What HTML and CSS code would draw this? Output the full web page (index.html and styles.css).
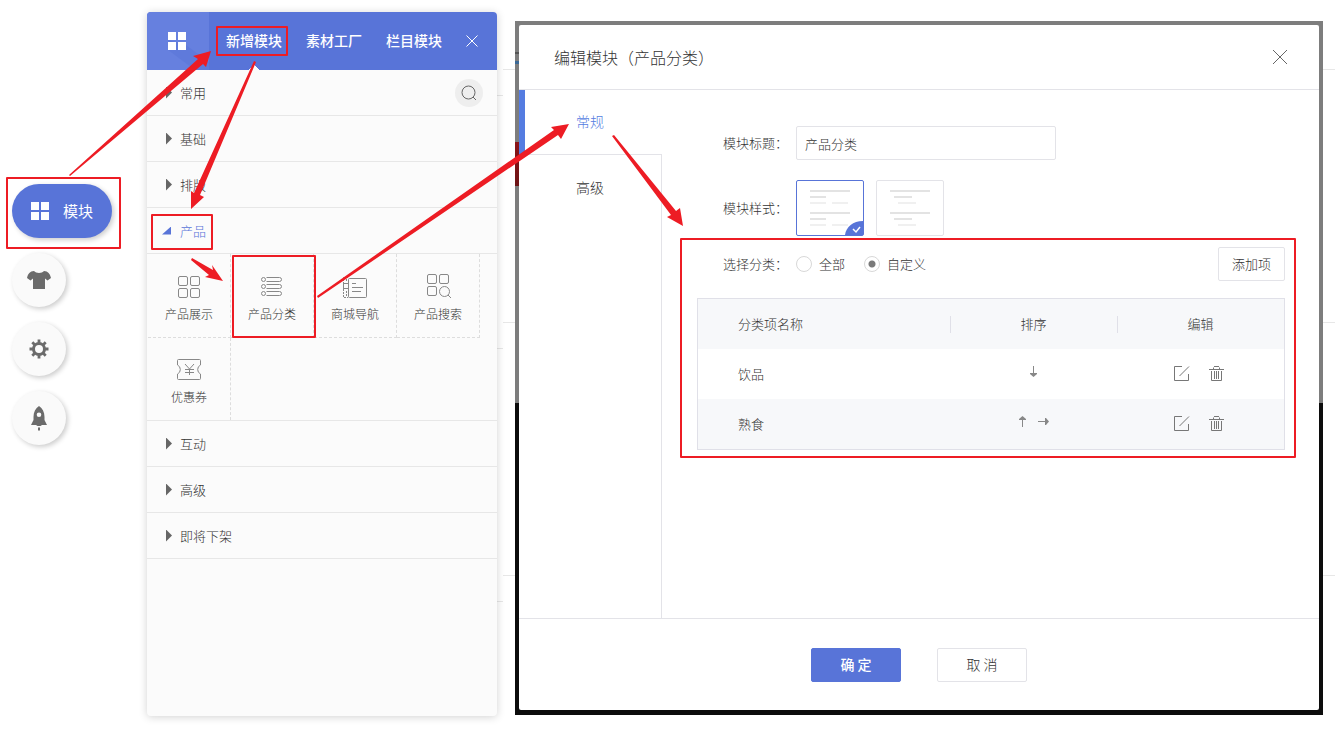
FILE: index.html
```html
<!DOCTYPE html>
<html lang="zh-CN">
<head>
<meta charset="utf-8">
<title>编辑模块</title>
<link rel="stylesheet" href="styles.css">
</head>
<body>
<svg class="defs" aria-hidden="true">
  <symbol id="tiles" viewBox="0 0 18 18"><path fill="currentColor" d="M0 0h8v8H0zM10 0h8v8h-8zM0 10h8v8H0zM10 10h8v8h-8z"/></symbol>
  <symbol id="edit" viewBox="0 0 16 16"><path fill="none" stroke="currentColor" d="M8 .5H.5v14h14V8M5.500 10L15 .5"/></symbol>
  <symbol id="trash" viewBox="0 0 16 16"><path fill="none" stroke="currentColor" d="M0 3.500h15M4.500 3V1.500M5 .5h5M10.500 3V1.500M2.500 5v9.500h10V5M5.500 5v8M7.500 5v8M9.500 5v8"/></symbol>
  <symbol id="arrow" viewBox="0 0 11 11"><path fill="currentColor" d="M5 0h1v7h3v1L5.500 11 2 8V7h3z"/></symbol>
</svg>

<nav class="rail">
  <button class="rail-btn rail-main"><svg width="18" height="18"><use href="#tiles"/></svg>模块</button>
  <button class="rail-btn" aria-label="样式"><svg width="24" height="18" viewBox="0 0 24 18"><path fill="currentColor" d="M7 0C9 2.500 15 2.500 17 0c4 .3 6 2.500 7 7l-3.500 2.500L18 7.500V18H6V7.500L3.500 9.500 0 7C1 2.500 3 .3 7 0z"/></svg></button>
  <button class="rail-btn" aria-label="设置"><svg width="20" height="20" viewBox="-10 -10 20 20"><circle r="5.500" fill="none" stroke="currentColor" stroke-width="3"/><g stroke="currentColor" stroke-width="2.800"><path d="M0-6v-3.500M0 6v3.500M-6 0h-3.500M6 0h3.500M4.300 4.300l2.400 2.400M-4.300-4.300l-2.400-2.400M4.300-4.300l2.400-2.400M-4.300 4.300l-2.400 2.400"/></g></svg></button>
  <button class="rail-btn" aria-label="发布"><svg width="16" height="25" viewBox="0 0 16 25"><path fill="currentColor" fill-rule="evenodd" d="M8 0c3.500 2.500 5.500 6 5.500 11v3L16 19h-5l-1.500 1h-3L5 19H0l2.500-5v-3C2.500 6 4.500 2.500 8 0zm0 6.500a2.300 2.300 0 1 0 0 4.600 2.300 2.300 0 0 0 0-4.600zM7 21.500h2V24l-1 1-1-1z"/></svg></button>
</nav>

<section class="panel">
  <header class="panel-head">
    <div class="panel-logo">
      <svg width="62" height="58" viewBox="0 0 62 58"><path fill="#5f7adb" d="M39 33l23 17v8H48L21 38V28z"/></svg>
      <svg class="panel-tiles" width="18" height="18"><use href="#tiles"/></svg>
    </div>
    <button class="panel-tab is-active">新增模块</button>
    <button class="panel-tab">素材工厂</button>
    <button class="panel-tab">栏目模块</button>
    <button class="panel-close" aria-label="关闭"><svg width="12" height="12" viewBox="0 0 12 12"><path stroke="currentColor" d="M.5 .5l11 11M11.500 .5l-11 11"/></svg></button>
  </header>
  <div class="group">
    <button class="group-name">常用</button>
    <button class="search" aria-label="搜索"><svg width="16" height="16" viewBox="0 0 16 16" fill="none" stroke="currentColor"><circle cx="7.500" cy="7.500" r="6.500"/><path d="M12 12l3 3"/></svg></button>
  </div>
  <div class="group"><button class="group-name">基础</button></div>
  <div class="group"><button class="group-name">排版</button></div>
  <div class="group"><button class="group-name is-open">产品</button></div>
  <div class="modules">
    <button class="module"><svg width="26" height="24" viewBox="0 0 26 24"><g fill="none" stroke="currentColor"><rect x="2.500" y=".5" width="9" height="9" rx="1.500"/><rect x="14.500" y=".5" width="9" height="9" rx="1.500"/><rect x="2.500" y="12.500" width="9" height="9" rx="1.500"/><rect x="14.500" y="12.500" width="9" height="9" rx="1.500"/></g></svg>产品展示</button>
    <button class="module"><svg width="26" height="24" viewBox="0 0 26 24"><g fill="none" stroke="currentColor"><circle cx="4.500" cy="3.500" r="2"/><circle cx="4.500" cy="10.500" r="2"/><circle cx="4.500" cy="17.500" r="2"/><path d="M7.500 1.500h13a2 2 0 0 1 0 4h-13M7.500 8.500h13a2 2 0 0 1 0 4h-13M7.500 15.500h13a2 2 0 0 1 0 4h-13"/></g></svg>产品分类</button>
    <button class="module"><svg width="26" height="24" viewBox="0 0 26 24"><g fill="none" stroke="currentColor"><rect x="6.500" y="2.500" width="18" height="19" rx="1"/><path d="M10 7.500h4M10 11.500h11M10 15.500h9M1.500 7.500h5M1.500 12.500h5M1.500 7v6"/><path stroke-dasharray="2 1" d="M6 1.500H1.500V7M1.500 13v8.500H6M4.500 3v3M4.500 15v5"/></g></svg>商城导航</button>
    <button class="module"><svg width="26" height="24" viewBox="0 0 26 24" overflow="visible"><g fill="none" stroke="currentColor"><rect x="2.500" y="-1.500" width="9" height="9" rx="1.500"/><rect x="14.500" y="-1.500" width="9" height="9" rx="1.500"/><rect x="2.500" y="10.500" width="9" height="9" rx="1.500"/><circle cx="19.500" cy="15.500" r="5"/><path d="M23 19l3 3"/></g></svg>产品搜索</button>
    <button class="module"><svg width="26" height="24" viewBox="0 0 26 24"><g fill="none" stroke="currentColor"><path d="M2.500 .5h21a1 1 0 0 1 1 1V6a5 5 0 0 0 0 9v4.500a1 1 0 0 1-1 1h-21a1 1 0 0 1-1-1V15a5 5 0 0 0 0-9V1.500a1 1 0 0 1 1-1z"/><path d="M9 5l4.500 5L18 5M13.500 10v6M9 10.500h9M9 13.500h9"/></g></svg>优惠券</button>
  </div>
  <div class="group"><button class="group-name">互动</button></div>
  <div class="group"><button class="group-name">高级</button></div>
  <div class="group"><button class="group-name">即将下架</button></div>
</section>

<div class="strip strip-near"></div>
<div class="strip"></div>

<main class="backdrop">
  <section class="dialog" role="dialog" aria-labelledby="dialog-title">
    <header class="dialog-head">
      <h1 id="dialog-title">编辑模块（产品分类）</h1>
      <button class="dialog-close" aria-label="关闭"><svg width="16" height="16" viewBox="0 0 16 16"><path stroke="currentColor" d="M1 1l14 14M15 1L1 15"/></svg></button>
    </header>
    <div class="dialog-body">
      <nav class="side">
        <button class="side-tab is-active">常规</button>
        <button class="side-tab">高级</button>
      </nav>
      <form class="form">
        <div class="field field-title">
          <label class="label" for="module-title">模块标题<span class="colon">：</span></label>
          <input class="text" id="module-title" type="text" value="产品分类">
        </div>
        <div class="field field-style">
          <span class="label">模块样式<span class="colon">：</span></span>
          <label class="swatch"><input type="radio" name="look" aria-label="样式一" checked>
            <svg width="66" height="54" viewBox="0 0 66 54"><path fill="#e3e3e3" d="M13 9h40v2H13zM13 15h16v2H13zM13 31h40v2H13zM13 37h16v2H13z"/><path fill="#f0f0f0" d="M13 21h16v2H13zM35 21h16v2H35zM13 43h16v2H13zM35 43h16v2H35z"/><path fill="#5874d8" d="M48 54c1-8 8-14 18-14v14z"/><path fill="none" stroke="#fff" stroke-width="1.500" d="M56 48l3 3 4-5"/></svg></label>
          <label class="swatch"><input type="radio" name="look" aria-label="样式二">
            <svg width="66" height="54" viewBox="0 0 66 54"><path fill="#e3e3e3" d="M13 9h40v2H13zM17 15h18v2H17zM13 31h40v2H13zM17 37h18v2H17z"/><path fill="#f0f0f0" d="M21 21h18v2H21zM21 43h18v2H21z"/></svg></label>
        </div>
        <div class="field field-kind">
          <span class="label">选择分类<span class="colon">：</span></span>
          <label class="choice"><input type="radio" name="kind">全部</label>
          <label class="choice"><input type="radio" name="kind" checked>自定义</label>
          <button type="button" class="btn btn-add">添加项</button>
        </div>
        <table class="items">
          <thead><tr><th class="col-name">分类项名称</th><th>排序</th><th>编辑</th></tr></thead>
          <tbody>
            <tr><td class="col-name">饮品</td>
              <td><div class="icons sort"><button type="button" aria-label="下移"><svg width="11" height="11"><use href="#arrow"/></svg></button></div></td>
              <td><div class="icons"><button type="button" aria-label="编辑"><svg width="16" height="16"><use href="#edit"/></svg></button><button type="button" aria-label="删除"><svg width="16" height="16"><use href="#trash"/></svg></button></div></td></tr>
            <tr><td class="col-name">熟食</td>
              <td><div class="icons sort"><button type="button" aria-label="上移"><svg class="up" width="11" height="11"><use href="#arrow"/></svg></button><button type="button" aria-label="降级"><svg class="right" width="11" height="11"><use href="#arrow"/></svg></button></div></td>
              <td><div class="icons"><button type="button" aria-label="编辑"><svg width="16" height="16"><use href="#edit"/></svg></button><button type="button" aria-label="删除"><svg width="16" height="16"><use href="#trash"/></svg></button></div></td></tr>
          </tbody>
        </table>
      </form>
    </div>
    <footer class="dialog-foot">
      <button class="btn btn-primary">确 定</button>
      <button class="btn btn-cancel">取 消</button>
    </footer>
  </section>
</main>
<div class="strip"></div>

<svg class="guide" width="1335" height="732" viewBox="0 0 1335 732" aria-hidden="true">
  <g fill="none" stroke="#ed1c24" stroke-width="2" stroke-linejoin="round">
    <rect x="7" y="178" width="113" height="70"/>
    <rect x="217" y="27" width="70" height="28"/>
    <rect x="152" y="215" width="60" height="34"/>
    <rect x="233" y="256" width="82" height="81"/>
    <rect x="681" y="239" width="614" height="218"/>
  </g>
  <g fill="#ed1c24">
    <path d="M69 175l1 1L203 64l3 3 5-16-18 5 5 3z"/>
    <path d="M254 61l2 1-56 133 4 2-13 12v-18l3 2z"/>
    <path d="M192 258l21 12-1-5 11 16-18-4 4-2-18-15z"/>
    <path d="M317 296l237-166-3-3 18-3-8 15-3-4-240 163z"/>
    <path d="M614 135l62 76 4-3 3 18-16-9 4-2-59-79z"/>
  </g>
</svg>
</body>
</html>
```
FILE: styles.css
```css
* { box-sizing: border-box; }

body {
  margin: 0;
  min-height: 100vh;
  display: flex;
  position: relative;
  overflow: hidden;
  background: #fff;
  color: #333;
  font: 300 13px/20px "Noto Sans CJK SC", sans-serif;
}

button, input {
  font: inherit;
  color: inherit;
  margin: 0;
}

button {
  border: 0;
  padding: 0;
  background: none;
  cursor: pointer;
}

svg { display: block; }

.defs {
  position: absolute;
  width: 0;
  height: 0;
}

/* Left rail */
.rail {
  flex: none;
  width: 147px;
  padding: 184px 0 0 12px;
  display: flex;
  flex-direction: column;
  gap: 15px;
}

.rail-btn {
  width: 54px;
  height: 54px;
  border-radius: 27px;
  display: flex;
  align-items: center;
  justify-content: center;
  background: #fafafa;
  color: #6b6b6b;
  box-shadow: 2px 2px 5px rgba(0, 0, 0, .2);
}

.rail-main {
  width: 100px;
  gap: 14px;
  background: #5874d8;
  color: #fff;
  font-size: 15px;
  font-weight: 400;
}

/* Module panel */
.panel {
  flex: none;
  width: 350px;
  margin: 12px 0 16px;
  border-radius: 4px;
  background: #fbfbfb;
  box-shadow: 0 1px 8px rgba(0, 0, 0, .18);
  z-index: 1;
}

.panel-head {
  height: 58px;
  display: flex;
  align-items: center;
  border-radius: 4px 4px 0 0;
  overflow: hidden;
  background: #5874d8;
  color: #fff;
}

.panel-logo {
  width: 62px;
  margin-right: 5px;
  display: grid;
  background: #6680df;
}

.panel-logo svg { grid-area: 1 / 1; }

.panel-tiles {
  align-self: center;
  margin-left: 21px;
}

.panel-tab {
  width: 80px;
  height: 58px;
  padding-bottom: 2px;
  font-size: 14px;
  font-weight: 500;
}

.panel-tab.is-active {
  background: conic-gradient(from 135deg at 50% 0, #fbfbfb 90deg, transparent 0) bottom center / 12px 6px no-repeat;
}

.panel-close { margin-left: 12px; }

.group {
  height: 46px;
  padding: 0 14px 0 19px;
  display: flex;
  align-items: center;
  justify-content: space-between;
  border-bottom: 1px solid #e7e7e7;
}

.group-name {
  display: flex;
  align-items: center;
  gap: 8px;
}

.group-name::before {
  content: "";
  width: 6px;
  height: 12px;
  background: #666;
  clip-path: polygon(0 0, 100% 50%, 0 100%);
}

.group-name.is-open {
  color: #5874d8;
  margin-left: -4px;
}

.group-name.is-open::before {
  width: 9px;
  height: 8px;
  margin-right: 1px;
  background: #5874d8;
  clip-path: polygon(100% 0, 100% 100%, 0 100%);
}

.search {
  width: 28px;
  height: 28px;
  border-radius: 50%;
  display: grid;
  place-items: center;
  background: #eee;
  color: #666;
}

.modules {
  display: grid;
  grid-template-columns: repeat(4, 83px);
  grid-template-rows: 84px 82px;
  padding-left: 1px;
  border-bottom: 1px solid #e7e7e7;
}

.module {
  display: flex;
  flex-direction: column;
  align-items: center;
  justify-content: center;
  gap: 4px;
  padding-top: 8px;
  font-size: 12px;
  border-right: 1px dashed #ddd;
  border-bottom: 1px dashed #ddd;
}

.module svg { color: #888; }

.module:last-child { border-bottom: 0; }

/* Page rules visible between the panels */
.strip {
  flex: none;
  width: 12px;
  background: repeating-linear-gradient(transparent 0 252px, #e7e7e7 252px 253px) 0 70px / 100% 506px no-repeat,
    linear-gradient(#e7e7e7, #e7e7e7) 0 69px / 100% 1px no-repeat;
}

.strip-near {
  width: 6px;
  background-position: 0 96px, 0 95px;
}

/* Dialog */
.backdrop {
  flex: 1;
  min-width: 0;
  margin: 21px 0 17px;
  padding: 4px 4px 5px;
  display: flex;
  background:
    linear-gradient(#8a1518, #6d1416) 0 121px / 4px 44px no-repeat,
    linear-gradient(#555, #555) 0 31px / 4px 2px no-repeat,
    linear-gradient(#3c6996, #3c6996) 0 40px / 4px 3px no-repeat,
    linear-gradient(#7d7d7d 0 382px, #0c0c0c 382px);
}

.dialog {
  flex: 1;
  min-width: 0;
  display: flex;
  flex-direction: column;
  border-radius: 2px;
  background: #fff;
}

.dialog-head {
  height: 65px;
  padding: 0 31px 0 35px;
  display: flex;
  align-items: center;
  justify-content: space-between;
  border-bottom: 1px solid #e3e3e8;
}

h1 {
  margin: 0;
  font-size: 16px;
  line-height: 24px;
  font-weight: inherit;
}

.dialog-close { color: #666; }

.dialog-body {
  flex: 1;
  display: flex;
}

.side {
  flex: none;
  width: 143px;
  display: flex;
  flex-direction: column;
}

.side-tab {
  height: 66px;
  padding-bottom: 2px;
  border-right: 1px solid #e3e3e8;
  font-size: 14px;
}

.side-tab.is-active {
  height: 65px;
  border-right: 0;
  border-left: 6px solid #557ce1;
  padding: 0 7px 4px 0;
  background: linear-gradient(#e3e3e8, #e3e3e8) bottom / 100% 1px no-repeat;
  color: #557ce1;
}

.side::after {
  content: "";
  flex: 1;
  border-right: 1px solid #e3e3e8;
}

.form {
  flex: 1;
  min-width: 0;
  padding: 36px 34px 0 35px;
}

.field {
  display: flex;
  align-items: center;
  padding-left: 26px;
}

.field-title { margin-bottom: 20px; }
.field-style { gap: 12px; }
.field-style .label { margin-right: -12px; }
.field-kind { margin: 11px 0 17px; }

.label { width: 73px; }

.colon { font-family: "Noto Sans CJK TC", sans-serif; }

.text {
  width: 260px;
  height: 34px;
  padding: 0 8px;
  border: 1px solid #e3e3e8;
  border-radius: 2px;
}

.swatch {
  display: grid;
  border: 1px solid #e3e3e8;
  border-radius: 2px;
}

.swatch:has(:checked) { border-color: #5874d8; }

.swatch > * { grid-area: 1 / 1; }

.swatch input {
  opacity: 0;
  justify-self: start;
}

.choice {
  display: flex;
  align-items: center;
  gap: 7px;
  margin-right: 19px;
}

.choice input {
  appearance: none;
  width: 16px;
  height: 16px;
  border: 1px solid #d8d8d8;
  border-radius: 50%;
}

.choice input:checked { background: radial-gradient(#7a7a7a 3px, transparent 4px); }

.btn {
  height: 34px;
  width: 90px;
  padding-bottom: 2px;
  border: 1px solid #e3e3e8;
  border-radius: 2px;
  font-size: 14px;
}

.btn-add {
  width: 67px;
  margin-left: auto;
  padding-bottom: 0;
  font-size: 13px;
}

.btn-primary {
  border-color: #5874d8;
  background: #5874d8;
  color: #fff;
  font-weight: 500;
}

.items {
  width: 100%;
  table-layout: fixed;
  border-spacing: 0;
  border: 1px solid #e0e0e8;
}

.items th, .items td {
  height: 50px;
  padding: 0;
  font-weight: inherit;
  text-align: center;
}

.items .col-name {
  width: 43%;
  padding-left: 40px;
  text-align: left;
}

.items thead tr, .items tbody tr:nth-child(even) { background: #f7f8fa; }

.items th + th { background: linear-gradient(#e0e0e8, #e0e0e8) left center / 1px 17px no-repeat; }

.icons {
  display: flex;
  justify-content: center;
  gap: 19px;
  padding-right: 2px;
  color: #777;
}

.icons.sort {
  gap: 10px;
  padding: 0 0 5px;
  color: #888;
}

.up { transform: rotate(180deg); }
.right { transform: rotate(-90deg); }

.dialog-foot {
  height: 92px;
  display: flex;
  align-items: center;
  justify-content: center;
  gap: 36px;
  border-top: 1px solid #e3e3e8;
}

/* Guide arrows and frames drawn over the page */
.guide {
  position: absolute;
  top: 0;
  left: 0;
  z-index: 2;
  pointer-events: none;
}
```
